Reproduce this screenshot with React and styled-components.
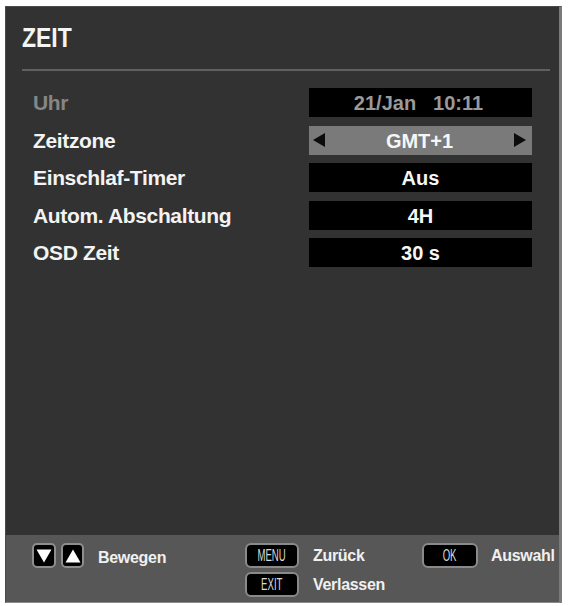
import React from "react";
import styled, { createGlobalStyle } from "styled-components";

const Global = createGlobalStyle`
  html, body { margin: 0; padding: 0; background: #ffffff; }
  body { font-family: "Liberation Sans", Arial, sans-serif; }
`;

const FONT = `"Liberation Sans", Arial, sans-serif`;

const Panel = styled.div`
  box-sizing: border-box;
  margin: 6px 0 0 5px;
  width: 557px;
  height: 597px;
  background: #323232;
  border: 1px solid #4a4a4a;
  border-right: 3px solid #7a7a7a;
  border-bottom: 1px solid #8a8a8a;
  display: flex;
  flex-direction: column;
  font-family: ${FONT};
`;

const Main = styled.div`
  flex: 1;
  display: flex;
  flex-direction: column;
`;

const Title = styled.h1`
  margin: 0;
  padding: 15px 0 0 16px;
  font-size: 28px;
  line-height: 32px;
  font-weight: 700;
  color: #f4f4f4;
`;

const TitleText = styled.span`
  display: inline-block;
  transform: scaleX(0.82);
  transform-origin: left center;
`;

const Separator = styled.div`
  height: 2px;
  margin: 15px 9px 0 16px;
  background: #606060;
`;

const Rows = styled.div`
  margin-top: 17px;
  padding: 0 27px;
  display: grid;
  grid-template-columns: 1fr 223px;
  grid-auto-rows: 29px;
  row-gap: 8.5px;
  align-items: center;
`;

const Label = styled.div`
  font-size: 21px;
  font-weight: 700;
  line-height: 29px;
  letter-spacing: -0.35px;
  color: ${(p) => (p.$disabled ? "#868686" : "#f3f3f3")};
`;

const Value = styled.div`
  box-sizing: border-box;
  height: 29px;
  padding-top: 2px;
  display: flex;
  align-items: center;
  justify-content: ${(p) => (p.$arrows ? "space-between" : "center")};
  padding-left: ${(p) => (p.$arrows ? "4px" : "0")};
  padding-right: ${(p) => (p.$arrows ? "6px" : "0")};
  background: ${(p) => (p.$selected ? "#7a7a7a" : "#000000")};
  color: ${(p) => (p.$disabled ? "#9a9a9a" : "#f6f6f6")};
  font-size: 20px;
  font-weight: 700;
  line-height: 27px;
`;

const Clock = styled.span`
  display: flex;
  gap: 17px;
  margin-right: 4px;
`;

const Arrow = styled.span`
  width: 0;
  height: 0;
  margin-top: -2px;
  border-top: 7px solid transparent;
  border-bottom: 7px solid transparent;
  ${(p) =>
    p.$dir === "left"
      ? "border-right: 12px solid #0c0c0c;"
      : "border-left: 12px solid #0c0c0c;"}
`;

const Footer = styled.div`
  height: 67px;
  box-sizing: border-box;
  background: #575757;
  padding: 8px 0 0 26px;
  display: grid;
  grid-template-columns: 213px 177px auto;
  align-items: start;
`;

const Group = styled.div`
  display: grid;
  grid-template-columns: auto auto;
  column-gap: ${(p) => p.$gap || 14}px;
  row-gap: 4px;
  align-items: center;
  justify-content: start;
`;

const Keys = styled.div`
  display: flex;
  gap: 5px;
`;

const ArrowKey = styled.div`
  box-sizing: border-box;
  width: ${(p) => p.$w || 24}px;
  height: 25px;
  background: #000;
  border: 2px solid #8e8e8e;
  border-radius: 5px;
  display: flex;
  align-items: center;
  justify-content: center;
`;

const TextKey = styled.div`
  box-sizing: border-box;
  width: ${(p) => p.$w}px;
  height: 25px;
  background: #000;
  border: 2px solid #8a8a8a;
  border-radius: 6px;
  display: flex;
  align-items: center;
  justify-content: center;
  color: #dadada;
  font-size: 16px;
  font-weight: 400;
  line-height: 1;
`;

const KeyText = styled.span`
  display: inline-block;
  transform: scaleX(0.6);
`;

const Hint = styled.span`
  font-size: 16px;
  font-weight: 700;
  color: #f0f0f0;
  line-height: 20px;
  letter-spacing: -0.3px;
  margin-top: ${(p) => p.$offset || 0}px;
`;

const Tri = ({ up }) => (
  <svg width="16" height="14" viewBox="0 0 16 14">
    <polygon
      points={up ? "8,0.5 15.5,13.5 0.5,13.5" : "0.5,0.5 15.5,0.5 8,13.5"}
      fill="#ffffff"
    />
  </svg>
);

const rows = [
  { label: "Uhr", disabled: true, clock: ["21/Jan", "10:11"] },
  { label: "Zeitzone", value: "GMT+1", selected: true },
  { label: "Einschlaf-Timer", value: "Aus" },
  { label: "Autom. Abschaltung", value: "4H" },
  { label: "OSD Zeit", value: "30 s" },
];

export default function App() {
  return (
    <>
      <Global />
      <Panel>
        <Main>
          <Title>
            <TitleText>ZEIT</TitleText>
          </Title>
          <Separator />
          <Rows>
            {rows.map((r) => (
              <React.Fragment key={r.label}>
                <Label $disabled={r.disabled}>{r.label}</Label>
                {r.clock ? (
                  <Value $disabled>
                    <Clock>
                      <span>{r.clock[0]}</span>
                      <span>{r.clock[1]}</span>
                    </Clock>
                  </Value>
                ) : r.selected ? (
                  <Value $selected $arrows>
                    <Arrow $dir="left" />
                    <span>{r.value}</span>
                    <Arrow $dir="right" />
                  </Value>
                ) : (
                  <Value>{r.value}</Value>
                )}
              </React.Fragment>
            ))}
          </Rows>
        </Main>
        <Footer>
          <Group>
            <Keys>
              <ArrowKey>
                <Tri />
              </ArrowKey>
              <ArrowKey $w={23}>
                <Tri up />
              </ArrowKey>
            </Keys>
            <Hint $offset={4}>Bewegen</Hint>
          </Group>
          <Group>
            <TextKey $w={54}>
              <KeyText>MENU</KeyText>
            </TextKey>
            <Hint>Zurück</Hint>
            <TextKey $w={54}>
              <KeyText>EXIT</KeyText>
            </TextKey>
            <Hint>Verlassen</Hint>
          </Group>
          <Group $gap={13}>
            <TextKey $w={56}>
              <KeyText>OK</KeyText>
            </TextKey>
            <Hint>Auswahl</Hint>
          </Group>
        </Footer>
      </Panel>
    </>
  );
}
